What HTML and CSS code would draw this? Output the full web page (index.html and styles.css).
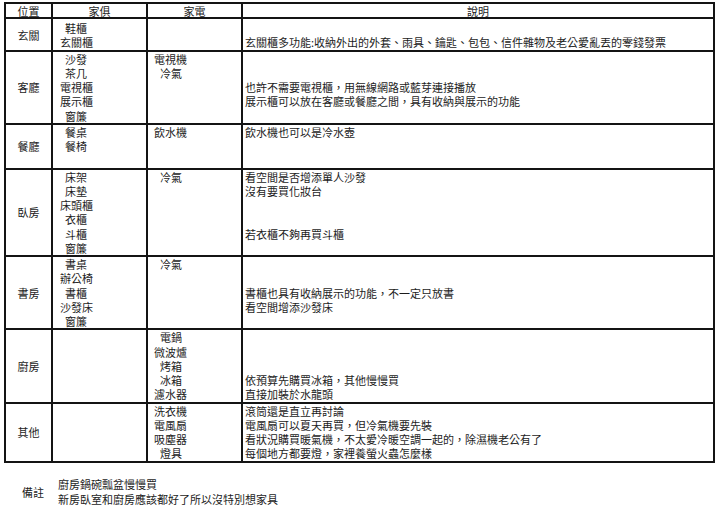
FILE: index.html
```html
<!DOCTYPE html>
<html lang="zh-Hant">
<head>
<meta charset="utf-8">
<title>家具清單</title>
<link rel="stylesheet" href="styles.css">
</head>
<body>
<div class="page">
  <table class="sheet">
    <colgroup>
      <col class="c-pos"><col class="c-furn"><col class="c-elec"><col class="c-note">
    </colgroup>
    <thead>
      <tr class="head">
        <th>位置</th><th>家俱</th><th>家電</th><th>說明</th>
      </tr>
    </thead>
    <tbody>
      <tr class="entry">
        <td class="pos">玄關</td>
        <td class="furn"><div class="ln in">鞋櫃</div><div class="ln">玄關櫃</div></td>
        <td class="elec"></td>
        <td class="note"><div class="ln">&nbsp;</div><div class="ln">玄關櫃多功能:收納外出的外套、雨具、鑰匙、包包、信件雜物及老公愛亂丟的零錢發票</div></td>
      </tr>
      <tr>
        <td class="pos">客廳</td>
        <td class="furn"><div class="ln in">沙發</div><div class="ln in">茶几</div><div class="ln">電視櫃</div><div class="ln">展示櫃</div><div class="ln in">窗簾</div></td>
        <td class="elec"><div class="ln">電視機</div><div class="ln in">冷氣</div></td>
        <td class="note"><div class="ln">&nbsp;</div><div class="ln">&nbsp;</div><div class="ln">也許不需要電視櫃，用無線網路或藍芽連接播放</div><div class="ln">展示櫃可以放在客廳或餐廳之間，具有收納與展示的功能</div></td>
      </tr>
      <tr>
        <td class="pos">餐廳</td>
        <td class="furn"><div class="ln in">餐桌</div><div class="ln in">餐椅</div><div class="ln">&nbsp;</div></td>
        <td class="elec"><div class="ln">飲水機</div></td>
        <td class="note"><div class="ln">飲水機也可以是冷水壺</div></td>
      </tr>
      <tr>
        <td class="pos">臥房</td>
        <td class="furn"><div class="ln in">床架</div><div class="ln in">床墊</div><div class="ln">床頭櫃</div><div class="ln in">衣櫃</div><div class="ln in">斗櫃</div><div class="ln in">窗簾</div></td>
        <td class="elec"><div class="ln in">冷氣</div></td>
        <td class="note"><div class="ln">看空間是否增添單人沙發</div><div class="ln">沒有要買化妝台</div><div class="ln">&nbsp;</div><div class="ln">&nbsp;</div><div class="ln">若衣櫃不夠再買斗櫃</div></td>
      </tr>
      <tr>
        <td class="pos">書房</td>
        <td class="furn"><div class="ln in">書桌</div><div class="ln">辦公椅</div><div class="ln in">書櫃</div><div class="ln">沙發床</div><div class="ln in">窗簾</div></td>
        <td class="elec"><div class="ln in">冷氣</div></td>
        <td class="note"><div class="ln">&nbsp;</div><div class="ln">&nbsp;</div><div class="ln">書櫃也具有收納展示的功能，不一定只放書</div><div class="ln">看空間增添沙發床</div></td>
      </tr>
      <tr>
        <td class="pos">廚房</td>
        <td class="furn"></td>
        <td class="elec"><div class="ln in">電鍋</div><div class="ln">微波爐</div><div class="ln in">烤箱</div><div class="ln in">冰箱</div><div class="ln">濾水器</div></td>
        <td class="note"><div class="ln">&nbsp;</div><div class="ln">&nbsp;</div><div class="ln">&nbsp;</div><div class="ln">依預算先購買冰箱，其他慢慢買</div><div class="ln">直接加裝於水龍頭</div></td>
      </tr>
      <tr>
        <td class="pos">其他</td>
        <td class="furn"></td>
        <td class="elec"><div class="ln">洗衣機</div><div class="ln">電風扇</div><div class="ln">吸塵器</div><div class="ln in">燈具</div></td>
        <td class="note"><div class="ln">滾筒還是直立再討論</div><div class="ln">電風扇可以夏天再買，但冷氣機要先裝</div><div class="ln">看狀況購買暖氣機，不太愛冷暖空調一起的，除濕機老公有了</div><div class="ln">每個地方都要燈，家裡養螢火蟲怎麼樣</div></td>
      </tr>
    </tbody>
  </table>

  <div class="remarks">
    <div class="remarks-label">備註</div>
    <div class="remarks-lines">
      <div>廚房鍋碗瓢盆慢慢買</div>
      <div>新房臥室和廚房應該都好了所以沒特別想家具</div>
    </div>
  </div>
</div>
</body>
</html>
```

FILE: styles.css
```css
html, body {
  margin: 0;
  padding: 0;
  background: #ffffff;
}

body {
  font-family: "Noto Sans CJK TC", "Noto Sans CJK SC", "DejaVu Sans", sans-serif;
  font-size: 11px;
  color: #1c1c1c;
}

.page {
  padding: 2px 0 0 4px;
}

.sheet {
  border-collapse: collapse;
  table-layout: fixed;
  width: 709px;
  border: 2px solid #0a0a0a;
}

.c-pos { width: 47px; }
.c-furn { width: 95px; }
.c-elec { width: 95px; }
.c-note { width: 472px; }

.sheet th,
.sheet td {
  border: 2px solid #141414;
  padding: 0;
  vertical-align: top;
  line-height: 14.25px;
  white-space: nowrap;
  overflow: hidden;
}

.sheet th {
  font-weight: normal;
  text-align: center;
  height: 12px;
  line-height: 12px;
  padding-top: 1px;
}

.sheet td.pos {
  text-align: center;
  vertical-align: middle;
}

.entry td {
  padding-top: 2px;
}

.ln {
  height: 14.25px;
}

.furn .ln {
  padding-left: 7px;
}

.furn .ln.in {
  padding-left: 12px;
}

.elec .ln {
  padding-left: 6px;
}

.elec .ln.in {
  padding-left: 12px;
}

.note .ln {
  padding-left: 2px;
}

.remarks {
  display: flex;
  align-items: center;
  margin-top: 14px;
  padding-left: 18px;
}

.remarks-label {
  width: 36px;
}

.remarks-lines {
  line-height: 15px;
}
```
